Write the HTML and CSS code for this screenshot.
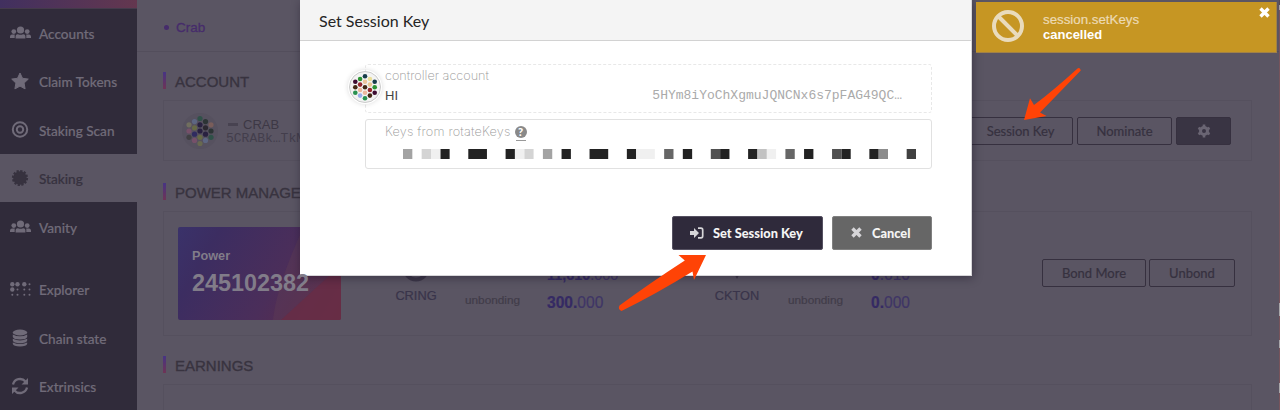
FILE: index.html
```html
<!DOCTYPE html>
<html lang="en">
<head>
<meta charset="utf-8">
<title>Staking</title>
<link rel="stylesheet" href="styles.css">
</head>
<body>
<svg width="0" height="0" class="defs">
  <defs>
    <g id="users"><circle cx="10.5" cy="4" r="3.6"/><circle cx="3.8" cy="5.6" r="2.4"/><circle cx="17.2" cy="5.6" r="2.4"/><path d="M5.6 12.6V10Q5.8 8 8 8.2Q10.5 9.2 13 8.2Q15.200 8 15.400 10V12.600zM0 12V10.500Q.2 8.600 2 8.500H4.800Q4.600 9.300 4.700 12zM21 12V10.500Q20.800 8.600 19 8.500H16.200Q16.400 9.300 16.300 12z"/></g>
    <g id="cross"><path d="M1.500 1.500L9.500 9.500M9.500 1.500L1.500 9.500" stroke="currentColor" stroke-width="3.400"/></g>
  </defs>
</svg>
<div class="app">
  <nav class="sidebar">
    <div class="brand"></div>
    <a class="item"><svg width="21" height="14"><use href="#users"/></svg>Accounts</a>
    <a class="item"><svg width="21" height="18"><path stroke="currentColor" stroke-linejoin="round" d="M10 1l2.500 5.300 5.800.8-4.200 4 1 5.800-5.100-2.800-5.100 2.800 1-5.800-4.200-4 5.800-.8z"/></svg>Claim Tokens</a>
    <a class="item"><svg width="21" height="17"><g fill="none" stroke="currentColor" stroke-width="2"><circle cx="10" cy="8.500" r="7.200"/><circle cx="10" cy="8.500" r="3.200"/></g></svg>Staking Scan</a>
    <a class="item active"><svg width="21" height="18"><circle cx="10" cy="9" r="6.800"/><circle cx="10" cy="9" r="7" fill="none" stroke="currentColor" stroke-width="2.200" stroke-dasharray="2.200 1.465"/></svg>Staking</a>
    <a class="item"><svg width="21" height="14"><use href="#users"/></svg>Vanity</a>
    <a class="item gap"><svg width="21" height="15"><circle cx="2.300" cy="2.300" r="2.200"/><circle cx="7.500" cy="2.300" r="2.200"/><circle cx="14.300" cy="2.300" r="2.200"/><circle cx="2.300" cy="7.500" r="2.200"/><circle cx="19.500" cy="2.300" r="1"/><circle cx="7.500" cy="7.500" r="1"/><circle cx="14.300" cy="7.500" r="1"/><circle cx="19.500" cy="7.500" r="1"/><circle cx="2.300" cy="12.700" r="1"/><circle cx="7.500" cy="12.700" r="1"/><circle cx="14.300" cy="12.700" r="1"/><circle cx="19.500" cy="12.700" r="1"/></svg>Explorer</a>
    <a class="item"><svg width="21" height="18"><ellipse cx="10" cy="3.500" rx="7.200" ry="3"/><path d="M2.800 5.500Q10 9.200 17.200 5.500V8Q16.500 10.500 10 10.500T2.800 8zM2.800 9.700Q10 13.200 17.200 9.700V11.600Q16.500 14.200 10 14.200T2.800 11.600zM2.800 13.400Q10 16.600 17.200 13.400V14.800Q16.500 17.500 10 17.500T2.800 14.800z"/></svg>Chain state</a>
    <a class="item"><svg width="21" height="18"><g fill="none" stroke="currentColor" stroke-width="2.300"><path d="M3 7.500A7.200 7.200 0 0 1 15.500 4.600M17 10.500A7.200 7.200 0 0 1 4.500 13.400"/></g><path d="M18 1V7.500H11.500zM2 17V10.500H8.500z"/></svg>Extrinsics</a>
  </nav>
  <main class="main">
    <header class="tabs"><i></i><span>Crab</span></header>
    <h2 class="heading">ACCOUNT</h2>
    <section class="card account">
      <svg class="ident" width="38" height="38"><circle cx="19" cy="19" r="18" fill="#56515f"/>
        <g transform="translate(19 19)"><circle cy="-12.500" r="2.600" fill="#2f5148"/><circle cx="-5.500" cy="-9.400" r="2.600" fill="#5d6682"/><circle cx="5.500" cy="-9.400" r="2.600" fill="#2c3435"/><circle cx="-11" cy="-6.200" r="2.600" fill="#706e5e"/><circle cx="11" cy="-6.200" r="2.600" fill="#795d5a"/><circle cy="-6.200" r="2.600" fill="#292140"/><circle cx="-5.500" cy="-3.200" r="2.600" fill="#676a46"/><circle cx="5.500" cy="-3.200" r="2.600" fill="#2b2830"/><circle cx="-11" r="2.600" fill="#765069"/><circle r="2.600" fill="#292140"/><circle cx="11" r="2.600" fill="#2c3435"/><circle cx="-5.500" cy="3.200" r="2.600" fill="#302b60"/><circle cx="5.500" cy="3.200" r="2.600" fill="#292140"/><circle cx="-11" cy="6.300" r="2.600" fill="#403f42"/><circle cy="6.300" r="2.600" fill="#676a46"/><circle cx="11" cy="6.300" r="2.600" fill="#2f5148"/><circle cx="-5.500" cy="9.400" r="2.600" fill="#765069"/><circle cx="5.500" cy="9.400" r="2.600" fill="#5d6682"/><circle cy="12.500" r="2.600" fill="#686950"/></g></svg>
      <div class="who"><div class="name"><b></b>CRAB</div><div class="addr">5CRABk…TkMAfM</div></div>
      <div class="actions"><button class="btn session">Session Key</button><button class="btn nominate">Nominate</button><button class="btn gear"><svg width="14" height="14" viewBox="-7 -7 14 14"><circle r="3.500" fill="none" stroke="currentColor" stroke-width="3"/><g stroke="currentColor" stroke-width="2.600"><path d="M0-6.500V-4M0 6.500V4M-5.600-3.200L-3.500-2M5.600 3.200L3.500 2M5.600-3.200L3.500-2M-5.600 3.200L-3.500 2"/></g></svg></button></div>
    </section>
    <h2 class="heading">POWER MANAGER</h2>
    <section class="card power">
      <div class="tile">
        <svg class="wave" width="163" height="93"><path d="M95 93Q98 62 122 8L163 0V93z" fill="#604052" opacity=".35"/><path d="M103 93L163 38V93z" fill="#6b2b43" opacity=".7"/></svg>
        <div class="tile-text"><span>Power</span><strong>245102382</strong></div>
      </div>
      <div class="token cring"><svg width="28" height="28"><circle cx="14" cy="14" r="11.500" fill="none" stroke="#3c3748" stroke-width="4"/></svg><span>CRING</span></div>
      <div class="label l1">unbonding</div>
      <div class="amounts a1"><div class="ring"><b>11,610</b>.000</div><div><b>300.</b>000</div></div>
      <div class="token ckton"><svg width="28" height="28"><path d="M14 3L20 14 14 25 8 14z" fill="#3c3748"/></svg><span>CKTON</span></div>
      <div class="label l2">unbonding</div>
      <div class="amounts a2"><div><b>0</b>.610</div><div><b>0.</b>000</div></div>
      <div class="actions"><button class="btn bond">Bond More</button><button class="btn unbond">Unbond</button></div>
    </section>
    <h2 class="heading">EARNINGS</h2>
    <section class="card earnings"></section>
  </main>
  <div class="edge"></div>
</div>

<div class="modal">
  <header>Set Session Key</header>
  <div class="field account-field">
    <svg class="avatar" width="34" height="34"><circle cx="17" cy="17" r="15.500" fill="#f3f3f3" stroke="#c9c9c9"/>
      <g transform="translate(17 17.300)"><circle cy="-11" r="2.300" fill="#173c4a"/><circle cx="-4.900" cy="-8.300" r="2.300" fill="#2b9232"/><circle cx="4.900" cy="-8.300" r="2.300" fill="#eadf98"/><circle cx="-9.700" cy="-5.500" r="2.300" fill="#3d0c31"/><circle cy="-5.500" r="2.300" fill="#ecc49c"/><circle cx="9.700" cy="-5.500" r="2.300" fill="#173c4a"/><circle cx="-4.900" cy="-2.700" r="2.300" fill="#96282d"/><circle cx="4.900" cy="-2.700" r="2.300" fill="#e9c692"/><circle cx="-9.700" r="2.300" fill="#432713"/><circle r="2.300" fill="#432713"/><circle cx="9.700" r="2.300" fill="#2b9232"/><circle cx="-4.900" cy="2.700" r="2.300" fill="#edb89d"/><circle cx="4.900" cy="2.700" r="2.300" fill="#96282d"/><circle cx="-9.700" cy="5.500" r="2.300" fill="#2a9150"/><circle cy="5.500" r="2.300" fill="#edb89d"/><circle cx="9.700" cy="5.500" r="2.300" fill="#3d0c31"/><circle cx="-4.900" cy="8.300" r="2.300" fill="#9bade8"/><circle cx="4.900" cy="8.300" r="2.300" fill="#432713"/><circle cy="11" r="2.300" fill="#2a9150"/></g></svg>
    <label>controller account</label>
    <div class="value"><span>HI</span><code>5HYm8iYoChXgmuJQNCNx6s7pFAG49QC…</code></div>
  </div>
  <div class="field keys-field">
    <label><span class="keys-label">Keys from rotateKeys</span> <span class="help">?</span></label>
    <svg class="mask" width="513" height="10" viewBox="0 0 55 1" preserveAspectRatio="none">
      <path fill="#222" d="M4 0h1v1h-1zM7 0h2v1h-2zM11 0h1v1h-1zM17 0h1v1h-1zM20 0h2v1h-2zM24 0h1v1h-1zM30 0h1v1h-1zM34 0h1v1h-1zM37 0h1v1h-1zM43 0h1v1h-1zM47 0h1v1h-1zM50 0h1v1h-1z"/>
      <path fill="#a3a3a3" d="M0 0h1v1h-1zM15 0h1v1h-1z"/>
      <path fill="#d4d4d4" d="M2 0h1v1h-1zM13 0h1v1h-1z"/>
      <path fill="#f0f0f0" d="M3 0h1v1h-1zM12 0h1v1h-1zM25 0h2v1h-2zM39 0h1v1h-1z"/>
      <path fill="#666" d="M28 0h1v1h-1zM41 0h1v1h-1z"/>
      <path fill="#515151" d="M33 0h1v1h-1zM46 0h1v1h-1z"/>
      <path fill="#c2c2c2" d="M38 0h1v1h-1z"/><path fill="#8c8c8c" d="M51 0h1v1h-1z"/><path fill="#404040" d="M54 0h1v1h-1z"/>
    </svg>
  </div>
  <footer>
    <button class="primary"><svg width="14" height="12"><path d="M0 4H4V1L9 6 4 11V8H0z"/><path d="M8 1.200H11Q12.700 1.200 12.700 3V9Q12.700 10.800 11 10.800H8" fill="none" stroke="currentColor" stroke-width="1.700"/></svg>Set Session Key</button>
    <button class="cancel"><svg width="11" height="11"><use href="#cross"/></svg>Cancel</button>
  </footer>
</div>

<div class="toast">
  <svg class="ban" width="34" height="34"><circle cx="17" cy="17" r="14" fill="none" stroke="#e9dbbc" stroke-width="4"/><path d="M7 7L27 27" stroke="#e9dbbc" stroke-width="4"/></svg>
  <div class="message"><span>session.setKeys</span><strong>cancelled</strong></div>
  <svg class="close" width="11" height="11"><use href="#cross"/></svg>
</div>

<svg class="arrows" width="1280" height="410">
  <path d="M1024 120L1030 98.300 1034 105Q1055 89 1077.500 68.400Q1080 67.300 1080.800 70.500L1040 112.500 1046.500 116z"/>
  <path d="M706 255L678.500 255 684.800 260.500Q650 283 619.500 305.500Q617.500 309 621.500 311Q656 294 692.500 271.500L694 280z"/>
</svg>
</body>
</html>
```
FILE: styles.css
```css
* { box-sizing: border-box; }
body { margin: 0; width: 1280px; height: 410px; overflow: hidden; position: relative; background: #5a5563; font-family: "Liberation Sans", Arial, sans-serif; color: #39344a; white-space: nowrap; }
svg { fill: currentColor; flex: none; display: block; }
.defs { position: absolute; }
.app { display: flex; height: 410px; overflow: hidden; }

.sidebar { width: 137px; flex: none; background: #302b3a; color: #706b79; font: 500 13.6px Lato, sans-serif; }
.brand { height: 9px; margin-bottom: -1px; background: linear-gradient(90deg, #41305f, #64374f); border-bottom: 1px solid #443b4b; }
.item { display: flex; align-items: center; height: 48.500px; padding: 3px 0 0 10px; gap: 8px; -webkit-text-stroke: .2px; }
.item.active { background: #5a5563; color: #37323f; }
.item svg { margin-top: -2px; }
.item.gap { margin-top: 14px; }

.main { width: 1142px; padding-right: 27px; flex: none; }
.tabs { height: 52px; margin-right: -27px; border-bottom: 1px solid #534e5c; padding: 3px 0 0 27px; display: flex; align-items: center; gap: 7px; color: #462c6b; font-size: 13.500px; -webkit-text-stroke: .3px; }
.tabs i { width: 5px; height: 5px; border-radius: 50%; background: currentColor; }
.heading { margin: 20px 0 11px 26px; height: 17px; padding-left: 9px; border-left: 3px solid; border-image: linear-gradient(#443487, #713452) 1; font-size: 15px; font-weight: 400; line-height: 19px; -webkit-text-stroke: .35px; color: #38333f; }
.card { margin-left: 26px; border: 1px solid #55505e; display: flex; }
.account { height: 61px; padding-left: 17px; align-items: center; }
.who { margin-left: 7px; color: #3d3845; }
.name { display: flex; align-items: center; gap: 5px; font-size: 13px; height: 15px; }
.name b { width: 10px; height: 3px; background: #484351; margin-left: 2px; }
.addr { font: 13px/13px "Liberation Mono", monospace; color: #433e4c; }
.actions { margin-left: auto; display: flex; }
.btn { height: 28px; border: 1px solid #36303f; border-radius: 2px; background: none; color: #36313f; font: 13px Lato, sans-serif; padding: 0; -webkit-text-stroke: .2px; }
.account .actions { gap: 4px; padding-right: 20px; }
.session { width: 105px; }
.nominate { width: 95px; }
.gear { width: 55px; background: #393443; color: #6a6573; display: flex; align-items: center; justify-content: center; }

.account + .heading { margin-top: 22px; }
.power { height: 125px; padding-left: 14px; align-items: flex-start; }
.tile { display: grid; width: 163px; height: 93px; margin-top: 15px; border-radius: 2px; overflow: hidden; background: linear-gradient(120deg, #3a326a 0%, #3c2d61 20%, #4b2e5a 60%, #612b47 100%); color: #817c89; }
.wave, .tile-text { grid-area: 1 / 1; }
.tile-text { padding: 20px 0 0 14px; display: flex; flex-direction: column; font-size: 12.700px; font-weight: 700; line-height: 18px; z-index: 1; }
.tile-text strong { font-size: 23.400px; line-height: 37px; }
.token { display: flex; flex-direction: column; align-items: center; padding-top: 42px; font-size: 12.800px; gap: 6px; -webkit-text-stroke: .2px; }
.cring { margin-left: 54px; width: 42px; }
.ckton { margin-left: 96px; width: 46px; }
.label { margin-top: 81px; font-size: 11.800px; line-height: 14px; color: #413c49; -webkit-text-stroke: .2px; width: 56px; }
.l1 { margin-left: 28px; }
.l2 { margin-left: 28px; }
.amounts { font-size: 15.600px; line-height: 28px; margin-top: 49px; color: #3f3566; width: 71px; -webkit-text-stroke: .2px; }
.amounts b { color: #352a63; }
.amounts .ring { font-size: 14.400px; }
.a1 { margin-left: 26px; }
.a2 { margin-left: 27px; }
.power .actions { gap: 3px; padding: 47px 16px 0 0; }
.bond { width: 104px; }
.unbond { width: 86px; }
.power + .heading { margin-top: 20px; }
.earnings { height: 60px; }
.edge { width: 1px; background: linear-gradient(#554a54 0 5px, #a69da0 5px 10px, #77545c 10px 303px, #a9a6a9 303px 316px, #77545c 316px 340px, #a9a6a9 340px 348px, #77545c 348px 383px, #a9a6a9 383px 393px, #77545c 393px); }

.modal { position: absolute; left: 300px; top: 0; width: 672px; height: 276px; background: #fff; border: solid #d7d6d9; border-width: 0 1px 1px 0; box-shadow: 1px 2px 9px rgba(20, 15, 30, .42); font-family: Lato, sans-serif; }
.modal header { height: 41px; background: #f4f4f4; border-bottom: 1px solid #d2d2d2; padding: 8px 19px; font-size: 16px; line-height: 25px; color: #252525; }
.field { margin-left: 65px; width: 567px; border-radius: 3px; padding-left: 19px; position: relative; }
.field label { display: flex; align-items: center; font: 200 12.700px/20px Inter, "Open Sans", sans-serif; color: #999; }
.field label { font-weight: 200; }
.account-field label { letter-spacing: -.01px; }
.account-field { margin-top: 23px; height: 49px; border: 1px dashed #e8e8e8; padding-top: 1px; }
.keys-field { margin-top: 6px; height: 50px; border: 1px solid #e1e1e1; padding-top: 2px; }
.keys-label { letter-spacing: .18px; }
.avatar { position: absolute; left: -18px; top: 5px; border-radius: 50%; box-shadow: 0 0 5px rgba(0, 0, 0, .14); }
.value { display: flex; justify-content: space-between; padding-right: 29px; font: 13px/20px "Liberation Sans", sans-serif; color: #444; }
.value code { font: 13px/20px "Liberation Mono", monospace; color: #aaa; }
.help { margin-left: 4px; width: 12px; height: 12px; border-radius: 50%; background: #898989; color: #fff; font: 900 11px/12px Lato, sans-serif; text-align: center; position: relative; }
.help::after { content: ""; position: absolute; left: 1px; bottom: -3px; width: 10px; height: 1px; background: #999; }
.mask { margin: 7px 0 0 18px; }
.modal footer { display: flex; justify-content: flex-end; gap: 9px; margin-top: 47px; padding-right: 39px; }
.modal footer button { height: 34px; border: 1px solid #555161; border-radius: 2px; padding: 0 0 1px; display: flex; align-items: center; color: #f4f4f4; font: 900 12.800px Lato, sans-serif; }
.modal footer svg { color: #d6d5d8; }
.modal footer .primary { width: 151px; background: #2f2a3b; padding-left: 17px; gap: 9px; }
.modal footer .cancel { width: 100px; background: #666; border-color: #808080; padding-left: 18px; gap: 10px; }

.toast { position: absolute; left: 976px; top: 2px; width: 301px; height: 51px; background: #c69623; border: solid #a18147; border-width: 0 1px 1px 0; display: flex; }
.ban { margin: 7px 0 0 15px; }
.message { margin: 10px 0 0 18px; display: flex; flex-direction: column; font-size: 13.300px; line-height: 15px; color: #ecdab4; }
.message strong { color: #fff; font-size: 13px; }
.message span { -webkit-text-stroke: .2px; }
.close { margin: 5px 6px 0 auto; color: #fff; }
.arrows { position: absolute; left: 0; top: 0; color: #ff4306; pointer-events: none; }
```
